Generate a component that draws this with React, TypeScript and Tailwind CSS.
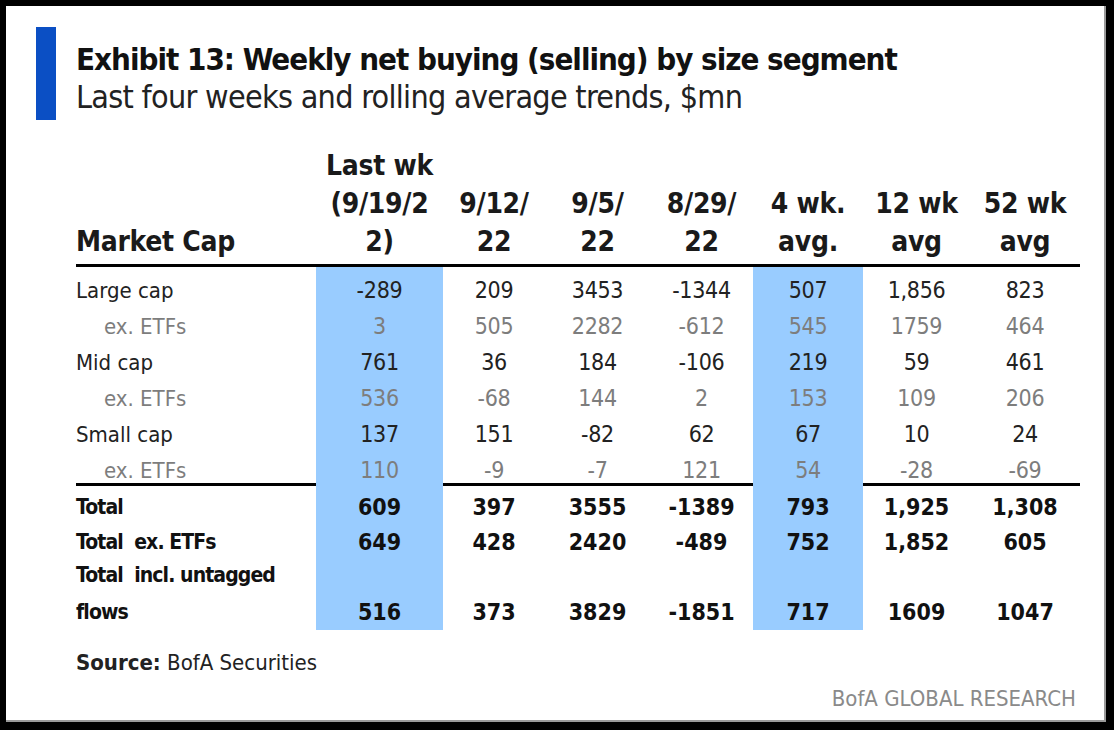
const cols = "grid grid-cols-[240px_127px_102px_105px_103px_110px_107px_110px]";

const heads: string[][] = [
  ["Last wk", "(9/19/2", "2)"],
  ["9/12/", "22"],
  ["9/5/", "22"],
  ["8/29/", "22"],
  ["4 wk.", "avg."],
  ["12 wk", "avg"],
  ["52 wk", "avg"],
];

const body: { label: string; sub?: boolean; v: string[] }[] = [
  { label: "Large cap", v: ["-289", "209", "3453", "-1344", "507", "1,856", "823"] },
  { label: "ex. ETFs", sub: true, v: ["3", "505", "2282", "-612", "545", "1759", "464"] },
  { label: "Mid cap", v: ["761", "36", "184", "-106", "219", "59", "461"] },
  { label: "ex. ETFs", sub: true, v: ["536", "-68", "144", "2", "153", "109", "206"] },
  { label: "Small cap", v: ["137", "151", "-82", "62", "67", "10", "24"] },
  { label: "ex. ETFs", sub: true, v: ["110", "-9", "-7", "121", "54", "-28", "-69"] },
];

const totals: { label: string; h: string; v: string[] }[] = [
  { label: "Total", h: "h-[35px]", v: ["609", "397", "3555", "-1389", "793", "1,925", "1,308"] },
  { label: "Total  ex. ETFs", h: "h-[35px]", v: ["649", "428", "2420", "-489", "752", "1,852", "605"] },
  { label: "Total  incl. untagged", h: "h-[35px]", v: ["", "", "", "", "", "", ""] },
  { label: "flows", h: "h-[32px]", v: ["516", "373", "3829", "-1851", "717", "1609", "1047"] },
];

const blue = (i: number) => (i === 0 || i === 4 ? "bg-[#99ccff]" : "");

export default function App() {
  return (
    <div className="w-[1114px] h-[730px] bg-black pl-[6px] pt-[6px] font-['Liberation_Sans_Narrow','DejaVu_Sans_Condensed',Roboto,sans-serif] font-stretch-condensed text-[#1a1a1a]">
      <div className="w-[1100px] h-[716px] bg-white border-r-2 border-b-2 border-[#9a9a9a] flex flex-col">
        <div className="flex gap-[20px] pl-[30px] pt-[21px]">
          <div className="w-[20px] h-[93px] bg-[#0b4fc4]" />
          <div className="flex flex-col pt-[13px]">
            <h1 className="text-[31px] leading-[39px] font-bold text-[#111] whitespace-nowrap tracking-[-1px]">
              Exhibit 13: Weekly net buying (selling) by size segment
            </h1>
            <p className="text-[32px] leading-[37px] text-[#222] whitespace-nowrap tracking-[-0.7px]">
              Last four weeks and rolling average trends, $mn
            </p>
          </div>
        </div>

        <div className="ml-[70px] mt-[27px] w-[1004px]">
          <div className={`${cols} items-end border-b-[3px] border-black pb-[3px]`}>
            <div className="text-[28px] leading-[38px] font-bold whitespace-nowrap tracking-[-0.3px]">Market Cap</div>
            {heads.map((h, i) => (
              <div key={i} className="text-[28px] leading-[38px] font-bold text-center whitespace-nowrap tracking-[-0.3px]">
                {h.map((l, j) => (
                  <div key={j}>{l}</div>
                ))}
              </div>
            ))}
          </div>

          {body.map((r, k) => (
            <div key={k} className={`${cols} h-[36px] text-[23px] ${r.sub ? "text-[#7d7d7d]" : "text-[#222]"}`}>
              <div className={`flex items-center pt-[6px] text-[22px] ${r.sub ? "pl-[28px]" : ""}`}>{r.label}</div>
              {r.v.map((v, i) => (
                <div key={i} className={`flex items-center justify-center pt-[6px] tracking-[-0.3px] ${blue(i)}`}>
                  {v}
                </div>
              ))}
            </div>
          ))}

          <div className="h-[3px] bg-black" />

          {totals.map((r, k) => (
            <div key={k} className={`${cols} ${r.h} text-[23px] font-bold text-[#111]`}>
              <div className="flex items-center pt-[4px] whitespace-pre text-[21px] tracking-[-0.9px]">{r.label}</div>
              {r.v.map((v, i) => (
                <div key={i} className={`flex items-center justify-center pt-[4px] ${blue(i)}`}>
                  {v}
                </div>
              ))}
            </div>
          ))}
        </div>

        <div className="ml-[70px] mt-[27px] text-[22px] leading-[26px] text-[#222]">
          <span className="font-bold">Source:</span> BofA Securities
        </div>
        <div className="mt-[10px] pr-[28px] text-right text-[22px] leading-[26px] text-[#8a8a8a]">
          BofA GLOBAL RESEARCH
        </div>
      </div>
    </div>
  );
}
